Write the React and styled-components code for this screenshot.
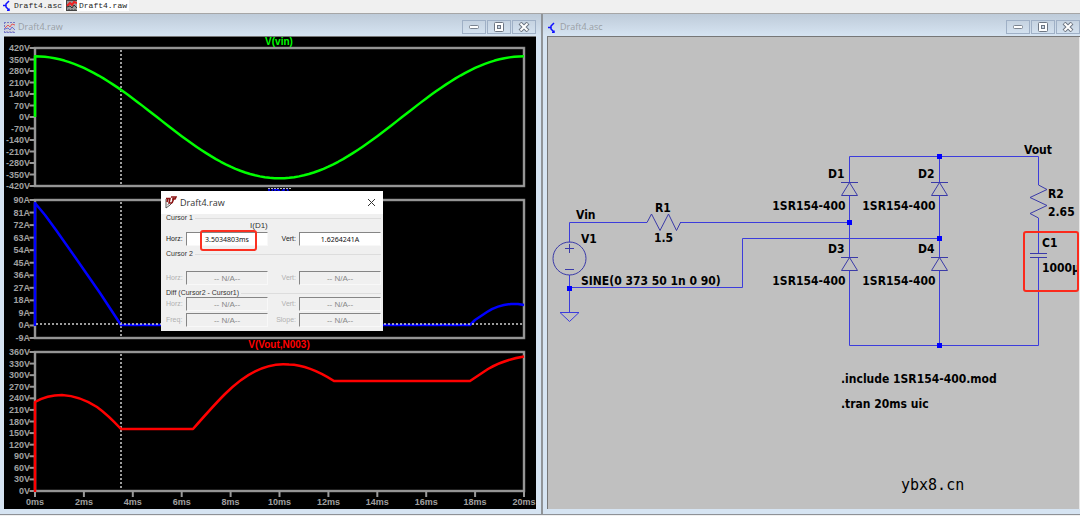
import styled, { createGlobalStyle } from "styled-components";

const GlobalStyle = createGlobalStyle`
    * {
        box-sizing: border-box;
    }
    body {
        margin: 0;
        background-color: #f0f0f0;
        font-family: "Open Sans", "Noto Sans", sans-serif;
    }
`;

const Tabs = styled.nav`
    display: flex;
    height: 14px;
    background-color: #f0f0f0;
    border-bottom: 1px solid #a6a6a6;
`;
const Tab = styled.a`
    display: flex;
    align-items: center;
    gap: 2px;
    height: 11px;
    padding: 0 2px;
    background-color: ${props => props.$active ? "#ffffff" : "transparent"};
    color: #222222;
    font: 8px/10px "Liberation Mono", monospace;
    text-decoration: none;
`;
const Workspace = styled.main`
    display: grid;
    grid-template-columns: 543fr 537fr;
    border-bottom: 1px solid #8e9196;
`;
const Window = styled.section`
    min-width: 0;
    padding: 0 ${props => props.$last ? 0 : 5}px 5px 4px;
    border-right: ${props => props.$last ? "none" : "2px solid #909498"};
    background: linear-gradient(#becbd9, #d6e4f2 22px);
`;
const TitleBar = styled.header`
    display: flex;
    align-items: center;
    gap: 3px;
    height: 22px;
    padding-top: 4px;
`;
const Title = styled.h2`
    flex: 1;
    margin: 0;
    color: #9a9fa5;
    font-size: 9px;
    line-height: 12px;
    font-weight: 400;
`;
const WindowButtons = styled.div`
    display: flex;
    gap: 1px;
`;
const WindowButton = styled.button`
    display: flex;
    align-items: center;
    justify-content: center;
    width: 24px;
    height: 14px;
    padding: 0;
    border: 1px solid #9fb0c6;
    background-color: transparent;
`;
const Pane = styled.div`
    position: relative;
    border-top: 1px solid #777777;
    background-color: ${props => props.$bg};
`;
const Drawing = styled.svg`
    display: block;
    width: 100%;
    height: auto;
`;
const AxisText = styled.text`
    fill: #a0a0a0;
    font: bold 9px "Liberation Sans", Arial, sans-serif;
`;
const TraceText = styled.text`
    fill: ${props => props.$color};
    font: bold 10px "Liberation Sans", Arial, sans-serif;
`;
const PartText = styled.text`
    fill: #000000;
    font: bold 12px "DejaVu Sans Condensed", "Noto Sans", sans-serif;
`;
const SiteText = styled.text`
    fill: #000000;
    font: 15px "DejaVu Sans Mono", monospace;
`;

const Dialog = styled.form`
    position: absolute;
    top: 154px;
    left: 157px;
    width: 222px;
    background-color: #f0f0f0;
    color: #333333;
    font: 7px/8px "Liberation Sans", Arial, sans-serif;
`;
const DialogHeader = styled.div`
    display: flex;
    align-items: center;
    gap: 3px;
    height: 23px;
    padding: 0 7px 0 4px;
    background-color: #ffffff;
`;
const DialogTitle = styled.h3`
    flex: 1;
    margin: 0;
    color: #333333;
    font: 9px/12px "Open Sans", sans-serif;
`;
const CloseButton = styled.button`
    display: flex;
    padding: 0;
    border: none;
    background: none;
`;
const Group = styled.fieldset`
    min-width: 0;
    margin: 0;
    padding: 0 2px 4px 5px;
    border: none;
`;
const Legend = styled.div`
    display: flex;
    align-items: center;
    gap: 2px;
    height: 8px;
    &::after {
        content: "";
        flex: 1;
        height: 1px;
        background-color: #dddddd;
    }
`;
const TraceName = styled.div`
    height: ${props => props.$empty ? 13 : 10}px;
    padding-left: 84px;
    font-size: 8px;
`;
const Fields = styled.div`
    display: grid;
    grid-template-columns: 17px 82px 25px 82px;
    column-gap: 3px;
    row-gap: 2px;
    align-items: center;
`;
const FieldLabel = styled.label`
    color: ${props => props.$disabled ? "#b0b0b0" : "#222222"};
    text-align: ${props => props.$right ? "right" : "left"};
`;
const Field = styled.input`
    width: 100%;
    height: 14px;
    padding: 0;
    border: 1px solid #f8f8f8;
    border-top-color: #858585;
    border-left-color: #858585;
    border-radius: 0;
    background-color: #ffffff;
    color: #111111;
    font: 7px/10px "Noto Sans", sans-serif;
    text-align: center;
    &:disabled {
        background-color: #f0f0f0;
        color: #888888;
        font: 8px/10px "Liberation Sans", Arial, sans-serif;
    }
`;
const Highlight = styled.div`
    position: absolute;
    top: 39px;
    left: 39px;
    width: 57px;
    height: 21px;
    border: 2px solid #fb3021;
    border-radius: 3px;
    pointer-events: none;
`;

const SchematicIcon = () => (
    <svg width="10" height="11" viewBox="0 0 10 11" fill="none" stroke="#1010ff" strokeWidth="1.5">
        <path d="M1 5.500H4M7 1L4 4V7L7 10M7 8.500V10.500H5" />
    </svg>
);

const WaveIcon = ({ faded }) => (
    <svg width="11" height="11" viewBox="0 0 11 11" fill="none" opacity={faded ? 0.7 : 1}>
        <rect width="11" height="11" fill={faded ? "#d0d0d4" : "#999999"} />
        <path d="M0 .5H11M.5 0V11M0 10.500H11M3 9V11M6 9V11M9 9V11" stroke={faded ? "#5555bb" : "#444444"} strokeDasharray={faded ? "2 1" : undefined} />
        <path d="M1 6L4 3L6 5L8 2L11 3" stroke="#ee2222" strokeWidth={faded ? 1 : 2} />
        <path d="M1 7L4 6L6 8L8 5L11 8" stroke={faded ? "#4444cc" : "#333333"} />
    </svg>
);

const AppIcon = () => (
    <svg width="12" height="13" viewBox="0 0 12 13" fill="none">
        <path d="M1 3V12L5 9L8 6" stroke="#555555" />
        <path d="M1 2.500H5L4 7H7M6 1H11L10 3H7M9 2L7 7M3 2L2 6" stroke="#8d1515" strokeWidth="1.6" />
        <path d="M2 9L4 8" stroke="#999999" />
    </svg>
);

const Controls = () => (
    <WindowButtons>
        <WindowButton type="button" aria-label="Minimize">
            <svg width="12" height="10" viewBox="0 0 12 10">
                <rect x="1.5" y="3.5" width="9" height="3" rx="1" fill="#fff" stroke="#7b8490" />
            </svg>
        </WindowButton>
        <WindowButton type="button" aria-label="Maximize">
            <svg width="12" height="10" viewBox="0 0 12 10">
                <rect x="1.5" y=".5" width="9" height="9" rx="1" fill="#fff" stroke="#6d7683" />
                <rect x="4.5" y="3.5" width="3" height="3" fill="#cbd7e5" stroke="#6d7683" />
            </svg>
        </WindowButton>
        <WindowButton type="button" aria-label="Close">
            <svg width="12" height="10" viewBox="0 0 12 10">
                <path d="M2 1L10 9M10 1L2 9" stroke="#6d7683" strokeWidth="4" />
                <path d="M2.500 1.500L9.500 8.500M9.500 1.500L2.500 8.500" stroke="#fff" strokeWidth="2" />
            </svg>
        </WindowButton>
    </WindowButtons>
);

const plots = [
    { top: 48, bottom: 186, max: 420, step: 70, count: 13, unit: "V" },
    { top: 200, bottom: 338, max: 90, step: 9, count: 12, unit: "A" },
    { top: 352, bottom: 491, max: 360, step: 30, count: 13, unit: "V" },
];

// one full 50 Hz period, 20 ms wide
const sine = Array.from({ length: 101 }, (_, i) =>
    `${35 + i * 4.89},${(117.3 - 61 * Math.cos(i * Math.PI / 50)).toFixed(2)}`
).join(" ");

const PlotFrame = ({ top, bottom, max, step, count, unit }) => (
    <g>
        <rect x="35" y={top} width="489" height={bottom - top} fill="none" stroke="#808080" strokeWidth="2.5" />
        <rect x="35" y={top} width="489" height={bottom - top} fill="none" stroke="#aaaaaa" strokeWidth="1" />
        {Array.from({ length: count }, (_, i) => {
            const y = top + i * (bottom - top) / (count - 1);
            return (
                <g key={i}>
                    <path d={`M29.500 ${y}H35`} stroke="#999999" strokeWidth="2" />
                    <AxisText x="30" y={y + 3} textAnchor="end">{max - i * step}{unit}</AxisText>
                </g>
            );
        })}
        <path d={`M121 ${top + 2}V${bottom - 1}`} stroke="#d0d0d0" strokeWidth="1.5" strokeDasharray="2 2" />
    </g>
);

const Waveforms = () => (
    <Drawing viewBox="4 37 532 472" role="img" aria-label="Waveforms">
        {plots.map(plot => <PlotFrame key={plot.top} {...plot} />)}
        {Array.from({ length: 11 }, (_, i) => (
            <g key={i}>
                <path d={`M${35 + i * 48.9} 491V497`} stroke="#999999" strokeWidth="2" />
                <AxisText x={35 + i * 48.9} y="505" textAnchor="middle">{i * 2}ms</AxisText>
            </g>
        ))}
        <TraceText $color="#00ff00" x="279" y="45" textAnchor="middle">V(vin)</TraceText>
        <TraceText $color="#0000ff" x="279" y="197" textAnchor="middle">I(D1)</TraceText>
        <path d="M268 188.500H291" stroke="#bbbbbb" strokeDasharray="2 1" />
        <TraceText $color="#ff0000" x="279" y="348" textAnchor="middle">V(Vout,N003)</TraceText>
        <g fill="none" strokeWidth="2.5" strokeLinejoin="round">
            <polyline stroke="#00ff00" points={`35,117 ${sine}`} />
            <path stroke="#0000ff" d="M35 326V203L45 215L56 230L75 257L100 293L121 325H470L475 320L487 312Q498 305 511 304H518L524 305" />
            <path stroke="#ff0000" d="M35 492V402Q47 395 62 395Q80 396 97 407Q108 415 121 429H193Q214 405 225 394Q258 361 289 364.500Q309 365 334 381H470L488 369Q503 360 524 356.500" />
        </g>
        <path d="M36 324H523" stroke="#d0d0d0" strokeWidth="1.5" strokeDasharray="2 2" />
    </Drawing>
);

const diodes = [
    { name: "D1", x: 849.5, y: 182.5 },
    { name: "D2", x: 939.5, y: 182.5 },
    { name: "D3", x: 849.5, y: 257.5 },
    { name: "D4", x: 939.5, y: 257.5 },
];

const nodes = [[569, 288], [849, 222], [939, 156], [939, 238], [939, 345]];

const labels = [
    ["Vin", 576, 219], ["V1", 581, 243], ["R1", 655, 212], ["1.5", 654, 242],
    ["SINE(0 373 50 1n 0 90)", 581, 285], ["Vout", 1024, 154], ["R2", 1048, 198],
    ["2.65", 1048, 216], ["C1", 1042, 247], ["1000µ", 1042, 272],
    [".include 1SR154-400.mod", 841, 383], [".tran 20ms uic", 841, 408],
];

const Schematic = () => (
    <Drawing viewBox="547 37 533 472" role="img" aria-label="Schematic">
        <path d="M547.500 37V509" stroke="#777777" />
        <g fill="none" stroke="#3c3cdc">
            <path d="M569.500 242.500V222.500H647M680 222.500H849.500M569.500 275V312.500M569.500 287.500H742.500V238.500H939.500" />
            <path d="M849.500 182V156.500H1038.500V185M849.500 195V257M849.500 270V345.500H1038.500V258M939.500 156V182M939.500 195V257M939.500 270V345M1038.500 218V253" />
            <path d="M560 312.500H579L569.500 321.500Z" />
        </g>
        <g fill="none" stroke="#3a3aa8">
            <circle cx="569.5" cy="258.5" r="16.5" />
            <path d="M565 248.500H574M569.500 244V253M565 269.500H574" />
            <path d="M647 222.500L651.500 214L660 230.500L668.500 214L676.500 230.500L680.500 222.500" />
            <path d="M1038.500 185L1047 189.500L1030 197.500L1047 205.500L1030 213.500L1038.500 218" />
            <path d="M1030 253.500H1047M1030 257.500H1047" />
            {diodes.map(({ name, x, y }) => (
                <path key={name} d={`M${x - 8.5} ${y}H${x + 8.5}M${x} ${y}L${x - 8} ${y + 13}H${x + 8}Z`} />
            ))}
        </g>
        {nodes.map(([x, y]) => (
            <rect key={`${x}-${y}`} x={x - 2} y={y - 2} width="5" height="5" fill="#0000ff" />
        ))}
        {diodes.map(({ name, x, y }) => (
            <g key={name}>
                <PartText x={x - 5} y={y - 5} textAnchor="end">{name}</PartText>
                <PartText x={x - 4} y={y + 27} textAnchor="end">1SR154-400</PartText>
            </g>
        ))}
        {labels.map(([text, x, y]) => <PartText key={text} x={x} y={y}>{text}</PartText>)}
        <path d="M1079.500 37V509" stroke="#e8e8e8" />
        <rect x="1024" y="232" width="54" height="59" rx="2" fill="none" stroke="#fb2a1c" strokeWidth="2" />
        <SiteText x="901" y="490">ybx8.cn</SiteText>
    </Drawing>
);

const ValuePair = ({ id, names, values = ["-- N/A--", "-- N/A--"], disabled }) => (
    <>
        <FieldLabel htmlFor={`${id}-a`} $disabled={disabled}>{names[0]}</FieldLabel>
        <Field id={`${id}-a`} defaultValue={values[0]} disabled={disabled} />
        <FieldLabel htmlFor={`${id}-b`} $disabled={disabled} $right>{names[1]}</FieldLabel>
        <Field id={`${id}-b`} defaultValue={values[1]} disabled={disabled} />
    </>
);

const CursorDialog = () => (
    <Dialog aria-label="Draft4.raw">
        <DialogHeader>
            <AppIcon />
            <DialogTitle>Draft4.raw</DialogTitle>
            <CloseButton type="button" aria-label="Close">
                <svg width="9" height="9" viewBox="0 0 9 9" stroke="#333333">
                    <path d="M1 1L8 8M8 1L1 8" />
                </svg>
            </CloseButton>
        </DialogHeader>
        <Group aria-label="Cursor 1">
            <Legend>Cursor 1</Legend>
            <TraceName>I(D1)</TraceName>
            <Fields>
                <ValuePair id="cursor1" names={["Horz:", "Vert:"]} values={["3.5034803ms", "1.6264241A"]} />
            </Fields>
        </Group>
        <Group aria-label="Cursor 2">
            <Legend>Cursor 2</Legend>
            <TraceName $empty />
            <Fields>
                <ValuePair id="cursor2" names={["Horz:", "Vert:"]} disabled />
            </Fields>
        </Group>
        <Group aria-label="Diff">
            <Legend>Diff (Cursor2 - Cursor1)</Legend>
            <Fields>
                <ValuePair id="diff" names={["Horz:", "Vert:"]} disabled />
                <ValuePair id="rate" names={["Freq:", "Slope:"]} disabled />
            </Fields>
        </Group>
        <Highlight />
    </Dialog>
);

const App = () => {
    return (
        <>
            <GlobalStyle />
            <Tabs>
                <Tab href="#asc"><SchematicIcon />Draft4.asc</Tab>
                <Tab href="#raw" $active><WaveIcon />Draft4.raw</Tab>
            </Tabs>
            <Workspace>
                <Window>
                    <TitleBar>
                        <WaveIcon faded />
                        <Title>Draft4.raw</Title>
                        <Controls />
                    </TitleBar>
                    <Pane $bg="#000000">
                        <Waveforms />
                        <CursorDialog />
                    </Pane>
                </Window>
                <Window $last>
                    <TitleBar>
                        <SchematicIcon />
                        <Title>Draft4.asc</Title>
                        <Controls />
                    </TitleBar>
                    <Pane $bg="#c0c0c0">
                        <Schematic />
                    </Pane>
                </Window>
            </Workspace>
        </>
    );
};

export default App;
